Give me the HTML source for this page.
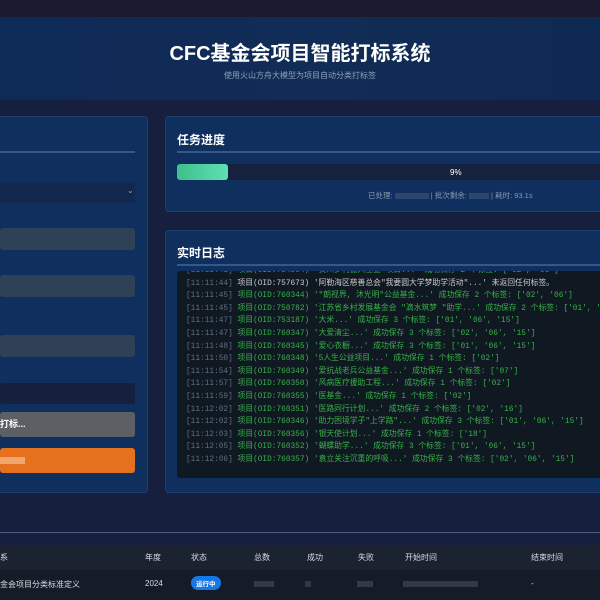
<!DOCTYPE html>
<html><head><meta charset="utf-8"><style>
*{margin:0;padding:0;box-sizing:border-box}
body{width:600px;height:600px;overflow:hidden;background:#161f3d;font-family:"Liberation Sans","Noto Sans CJK SC",sans-serif;position:relative}
.abs{position:absolute}
.panel{position:absolute;background:#0f2f5e;border:1px solid #1c3f70;border-radius:4px}
.h{color:#fff;font-weight:bold;font-size:12px}
.line{position:absolute;height:2px;background:#35578a}
.log div{white-space:nowrap;font-family:"Liberation Mono","Noto Sans CJK SC",monospace;font-size:7.8px;color:#38b24a;height:12.6px;line-height:12.6px}
.log .t{color:#5f6e80}
.blur{display:inline-block;background:#6b7484;opacity:.35;height:6px;vertical-align:middle}
</style></head><body>
<div class="abs" style="left:0;top:0;width:600px;height:17px;background:#1b1a2e"></div>
<div class="abs" style="left:0;top:17px;width:600px;height:83px;background:linear-gradient(90deg,#0e2a56,#112c56,#0f2a52)"></div>
<div class="abs" style="left:0;top:37px;width:600px;text-align:center;color:#fff;font-weight:bold;font-size:20px">CFC基金会项目智能打标系统</div>
<div class="abs" style="left:0;top:70px;width:600px;text-align:center;color:#8fa0b8;font-size:8px">使用火山方舟大模型为项目自动分类打标签</div>

<div class="panel" style="left:-5px;top:116px;width:153px;height:377px"></div>
<div class="line" style="left:0;top:151px;width:135px"></div>
<div class="abs" style="left:0;top:182px;width:135px;height:21px;background:#13284e"></div>
<div class="abs" style="left:127px;top:186px;color:#8aa;font-size:8px">⌄</div>
<div class="abs" style="left:0;top:228px;width:135px;height:22px;background:#2e4156;border-radius:3px"></div>
<div class="abs" style="left:0;top:275px;width:135px;height:22px;background:#2e4156;border-radius:3px"></div>
<div class="abs" style="left:0;top:335px;width:135px;height:22px;background:#2e4156;border-radius:3px"></div>
<div class="abs" style="left:0;top:383px;width:135px;height:21px;background:#15203f;border-radius:2px"></div>
<div class="abs" style="left:0;top:412px;width:135px;height:25px;background:#5c5f64;border-radius:3px;color:#fff;font-size:9px;font-weight:bold;line-height:25px">打标...</div>
<div class="abs" style="left:0;top:448px;width:135px;height:25px;background:#e5711e;border-radius:3px"><span class="abs" style="left:0;top:9px;width:25px;height:7px;background:#f8c9a4;opacity:.6"></span></div>

<div class="panel" style="left:165px;top:116px;width:445px;height:96px"></div>
<div class="abs h" style="left:177px;top:131px">任务进度</div>
<div class="line" style="left:177px;top:151px;width:430px"></div>
<div class="abs" style="left:177px;top:164px;width:430px;height:16px;background:#15213d;border-radius:3px"></div>
<div class="abs" style="left:177px;top:164px;width:51px;height:16px;background:linear-gradient(90deg,#3fbf8a,#5ee0b5);border-radius:3px"></div>
<div class="abs" style="left:450px;top:168px;color:#fff;font-size:8px">9%</div>
<div class="abs" style="left:368px;top:190px;color:#8a9ab0;font-size:7.5px;white-space:nowrap">已处理: <span class="blur" style="width:34px"></span> | 批次剩余: <span class="blur" style="width:20px"></span> | 耗时: 93.1s</div>

<div class="panel" style="left:165px;top:230px;width:445px;height:263px"></div>
<div class="abs h" style="left:177px;top:244px">实时日志</div>
<div class="line" style="left:177px;top:264px;width:430px"></div>
<div class="abs log" style="left:177px;top:271px;width:430px;height:207px;background:#101822;border-radius:3px;padding:0 0 0 9px;overflow:hidden">
<div style="margin-top:-6px"><span class="t">[11:11:41]</span>  项目(OID:754904) '贵州乡村振兴基金 项目...' 成功保存 2 个标签: ['02', '06']</div>
<div style="color:#ccc"><span class="t">[11:11:44]</span>  项目(OID:757673) '阿勒海区慈善总会"我要圆大学梦助学活动"...' 未返回任何标签。</div>
<div><span class="t">[11:11:45]</span>  项目(OID:760344) '"朗视界, 沐光明"公益基金...' 成功保存 2 个标签: ['02', '06']</div>
<div><span class="t">[11:11:45]</span>  项目(OID:750782) '江苏省乡村发展基金会 "滴水筑梦 "助学...' 成功保存 2 个标签: ['01', '08']</div>
<div><span class="t">[11:11:47]</span>  项目(OID:753187) '大米...' 成功保存 3 个标签: ['01', '06', '15']</div>
<div><span class="t">[11:11:47]</span>  项目(OID:760347) '大爱清尘...' 成功保存 3 个标签: ['02', '06', '15']</div>
<div><span class="t">[11:11:48]</span>  项目(OID:760345) '爱心衣橱...' 成功保存 3 个标签: ['01', '06', '15']</div>
<div><span class="t">[11:11:50]</span>  项目(OID:760348) '5人生公益项目...' 成功保存 1 个标签: ['02']</div>
<div><span class="t">[11:11:54]</span>  项目(OID:760349) '爱抗战老兵公益基金...' 成功保存 1 个标签: ['07']</div>
<div><span class="t">[11:11:57]</span>  项目(OID:760350) '风病医疗援助工程...' 成功保存 1 个标签: ['02']</div>
<div><span class="t">[11:11:59]</span>  项目(OID:760355) '医基金...' 成功保存 1 个标签: ['02']</div>
<div><span class="t">[11:12:02]</span>  项目(OID:760351) '医路同行计划...' 成功保存 2 个标签: ['02', '16']</div>
<div><span class="t">[11:12:02]</span>  项目(OID:760346) '助力困境学子"上学路"...' 成功保存 3 个标签: ['01', '06', '15']</div>
<div><span class="t">[11:12:03]</span>  项目(OID:760356) '银天使计划...' 成功保存 1 个标签: ['18']</div>
<div><span class="t">[11:12:05]</span>  项目(OID:760352) '蝴蝶助学...' 成功保存 3 个标签: ['01', '06', '15']</div>
<div><span class="t">[11:12:06]</span>  项目(OID:760357) '袁立关注沉重的呼吸...' 成功保存 3 个标签: ['02', '06', '15']</div>
</div>

<div class="abs" style="left:0;top:532px;width:600px;height:1px;background:#4a5a80"></div>
<div class="abs" style="left:0;top:545px;width:600px;height:25px;background:#1b2230"></div>
<div class="abs" style="left:0;top:570px;width:600px;height:30px;background:#151b27"></div>
<div class="abs" style="top:552px;left:0;color:#d8dde5;font-size:8px;width:600px;height:12px">
<span class="abs" style="left:0">系</span><span class="abs" style="left:145px">年度</span><span class="abs" style="left:191px">状态</span><span class="abs" style="left:254px">总数</span><span class="abs" style="left:307px">成功</span><span class="abs" style="left:358px">失败</span><span class="abs" style="left:405px">开始时间</span><span class="abs" style="left:531px">结束时间</span></div>
<div class="abs" style="top:579px;left:0;color:#d8dde5;font-size:8px;width:600px;height:12px">
<span class="abs" style="left:0">金会项目分类标准定义</span><span class="abs" style="left:145px">2024</span>
<span class="abs" style="left:191px;top:-3px;background:#1677e8;color:#fff;border-radius:7px;padding:2px 5px;font-size:6.5px;font-weight:bold">运行中</span>
<span class="abs blur" style="left:254px;top:2px;width:20px"></span><span class="abs blur" style="left:305px;top:2px;width:6px"></span><span class="abs blur" style="left:357px;top:2px;width:16px"></span><span class="abs blur" style="left:403px;top:2px;width:75px"></span><span class="abs" style="left:531px">-</span></div>
</body></html>
